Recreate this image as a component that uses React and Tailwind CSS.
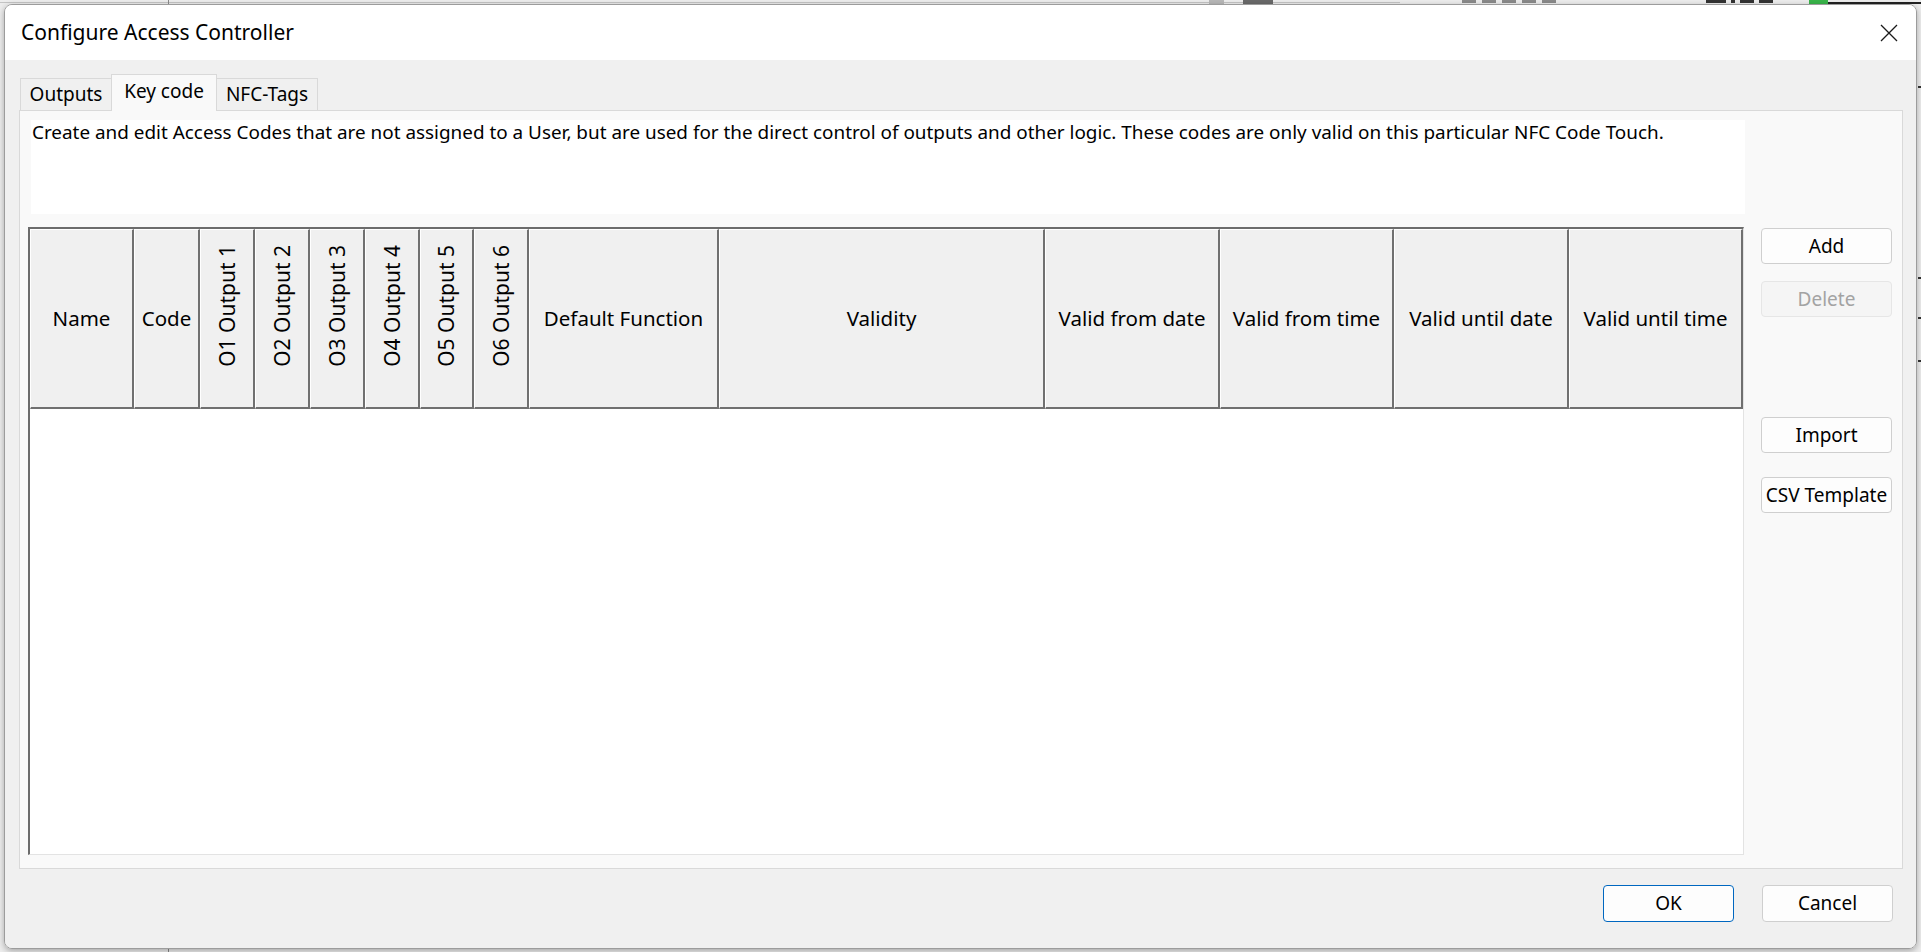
import React from 'react';

const columns = [
  { label: 'Name', w: 'w-[104px]' },
  { label: 'Code', w: 'w-[66px]' },
  { label: 'O1 Output 1', w: 'w-[55px]', vertical: true },
  { label: 'O2 Output 2', w: 'w-[55px]', vertical: true },
  { label: 'O3 Output 3', w: 'w-[55px]', vertical: true },
  { label: 'O4 Output 4', w: 'w-[55px]', vertical: true },
  { label: 'O5 Output 5', w: 'w-[54px]', vertical: true },
  { label: 'O6 Output 6', w: 'w-[55px]', vertical: true },
  { label: 'Default Function', w: 'w-[190px]' },
  { label: 'Validity', w: 'w-[326px]' },
  { label: 'Valid from date', w: 'w-[175px]' },
  { label: 'Valid from time', w: 'w-[174px]' },
  { label: 'Valid until date', w: 'w-[175px]' },
  { label: 'Valid until time', w: 'w-[174px]' },
];

function Button({ children, disabled, primary, className = '' }) {
  let look = 'border-[#cfcfcf] bg-[#fdfdfd] text-black';
  if (disabled) look = 'border-[#e6e6e6] bg-[#f5f5f5] text-[#a3a3a3]';
  if (primary) look = 'border-[#0067c0] bg-[#fdfdfd] text-black';
  return (
    <button className={`w-[131px] h-[36px] rounded-[4px] border ${look} flex items-center justify-center text-[19px] leading-none ${className}`}>
      {children}
    </button>
  );
}

function HeaderCell({ col }) {
  if (col.vertical) {
    return (
      <div className={`${col.w} shrink-0 h-full flex items-start justify-center pt-[15px] border-l border-t border-l-white border-t-white border-r-2 border-b-2 border-r-[#707070] border-b-[#707070]`}>
        <span className="[writing-mode:vertical-rl] rotate-180 whitespace-nowrap leading-none text-[21px]">{col.label}</span>
      </div>
    );
  }
  return (
    <div className={`${col.w} shrink-0 h-full flex items-center justify-center whitespace-nowrap border-l border-t border-l-white border-t-white border-r-2 border-b-2 border-r-[#707070] border-b-[#707070]`}>
      {col.label}
    </div>
  );
}

function CloseIcon() {
  return (
    <svg width="18" height="18" viewBox="0 0 18 18" fill="none" stroke="#1a1a1a" strokeWidth="1.3">
      <path d="M1 1 L17 17 M17 1 L1 17" />
    </svg>
  );
}

export default function App() {
  return (
    <div className="relative w-[1921px] h-[952px] overflow-hidden bg-[#ededed] text-black font-['Noto_Sans',sans-serif]">
      {/* bits of the application window behind the dialog */}
      <div className="absolute left-0 top-[2px] w-[1400px] h-px bg-[#c4c4c4]" />
      <div className="absolute left-[168px] top-0 w-px h-[5px] bg-[#8a8a8a]" />
      <div className="absolute left-[168px] bottom-0 w-px h-[5px] bg-[#8a8a8a]" />
      <div className="absolute left-[1209px] top-0 w-[15px] h-[4px] bg-[#b8b8b8]" />
      <div className="absolute left-[1243px] top-0 w-[30px] h-[4px] bg-[#6a6a6a]" />
      <div className="absolute left-[1462px] top-0 flex gap-[6px]">
        <span className="w-[14px] h-[3px] bg-[#8a8a8a]" />
        <span className="w-[14px] h-[3px] bg-[#8a8a8a]" />
        <span className="w-[14px] h-[3px] bg-[#8a8a8a]" />
        <span className="w-[14px] h-[3px] bg-[#8a8a8a]" />
        <span className="w-[14px] h-[3px] bg-[#8a8a8a]" />
      </div>
      <div className="absolute left-[1706px] top-0 flex gap-[5px]">
        <span className="w-[20px] h-[3px] bg-[#333]" />
        <span className="w-[4px] h-[3px] bg-[#333]" />
        <span className="w-[14px] h-[3px] bg-[#333]" />
        <span className="w-[14px] h-[3px] bg-[#333]" />
      </div>
      <div className="absolute left-[1809px] top-0 w-[19px] h-[4px] bg-[#39b54a]" />
      <div className="absolute left-[1828px] top-[2px] w-[93px] h-[2px] bg-[#222]" />
      <div className="absolute right-0 top-[86px] w-[3px] h-[2px] bg-[#333]" />
      <div className="absolute right-0 top-[277px] w-[3px] h-[2px] bg-[#333]" />
      <div className="absolute right-0 top-[317px] w-[3px] h-[2px] bg-[#333]" />
      <div className="absolute right-0 top-[360px] w-[3px] h-[2px] bg-[#333]" />

      {/* dialog */}
      <div className="absolute left-[4px] top-[4px] w-[1913px] h-[945px] rounded-[8px] border border-[#9c9c9c] overflow-hidden flex flex-col shadow-[0_2px_6px_rgba(0,0,0,0.3)]">
        <div className="h-[55px] shrink-0 bg-white flex items-center justify-between pl-[16px] pr-[18px]">
          <span className="text-[21px]">Configure Access Controller</span>
          <CloseIcon />
        </div>

        <div className="flex-1 bg-[#f0f0f0] flex flex-col pt-[14px] text-[19px]">
          {/* tabs */}
          <div className="flex items-end h-[36px] pl-[15px]">
            <div className="w-[91px] h-[32px] border-l border-t border-[#d9d9d9] flex items-center justify-center">Outputs</div>
            <div className="relative z-10 w-[106px] h-[37px] mb-[-1px] border-l border-t border-r border-[#d9d9d9] bg-[#f9f9f9] flex items-center justify-center pb-[4px]">Key code</div>
            <div className="w-[101px] h-[32px] border-t border-r border-[#d9d9d9] flex items-center justify-center">NFC-Tags</div>
          </div>

          {/* tab page */}
          <div className="ml-[14px] w-[1884px] h-[759px] border border-[#d9d9d9] bg-[#f9f9f9] flex">
            <div className="ml-[8px] w-[1716px] flex flex-col pt-[9px]">
              <div className="ml-[3px] w-[1714px] h-[94px] bg-white pl-[1px] text-[18.9px] leading-[24px]">
                Create and edit Access Codes that are not assigned to a User, but are used for the direct control of outputs and other logic. These codes are only valid on this particular NFC Code Touch.
              </div>
              <div className="mt-[13px] h-[628px] border-l-2 border-t-2 border-l-[#6c6c6c] border-t-[#6c6c6c] border-r border-b border-r-[#e3e3e3] border-b-[#e3e3e3] bg-white flex flex-col">
                <div className="h-[180px] flex bg-[#f0f0f0] text-[20.5px]">
                  {columns.map((col) => (
                    <HeaderCell key={col.label} col={col} />
                  ))}
                </div>
                <div className="flex-1 bg-white" />
              </div>
            </div>

            <div className="ml-[17px] flex flex-col pt-[117px]">
              <Button>Add</Button>
              <Button disabled className="mt-[17px]">Delete</Button>
              <Button className="mt-[100px]">Import</Button>
              <Button className="mt-[24px]">CSV Template</Button>
            </div>
          </div>

          {/* dialog buttons */}
          <div className="flex justify-end gap-[28px] mt-[16px] pr-[23px]">
            <Button primary className="h-[37px]">OK</Button>
            <Button className="h-[37px]">Cancel</Button>
          </div>
        </div>
      </div>
    </div>
  );
}
